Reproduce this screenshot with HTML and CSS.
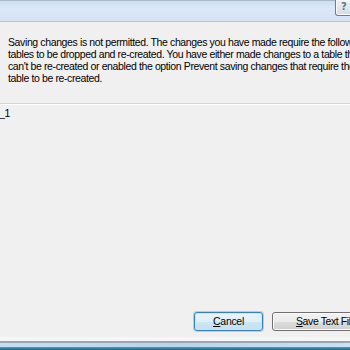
FILE: index.html
```html
<!DOCTYPE html>
<html>
<head>
<meta charset="utf-8">
<link rel="stylesheet" href="styles.css">
</head>
<body>
<div class="dialog">
  <div class="titlebar">
    <div class="help">?</div>
  </div>
  <div class="message">
    <span class="line">Saving changes is not permitted. The changes you have made require the following</span>
    <span class="line">tables to be dropped and re-created. You have either made changes to a table that</span>
    <span class="line">can't be re-created or enabled the option Prevent saving changes that require the</span>
    <span class="line">table to be re-created.</span>
  </div>
  <div class="list">
    <div class="item">_1</div>
  </div>
  <div class="buttons">
    <button class="btn default"><u>C</u>ancel</button>
    <button class="btn save"><u>S</u>ave Text File</button>
  </div>
  <div class="footer">
    <div class="f1"></div>
    <div class="f2"></div>
    <div class="f3"></div>
    <div class="f4"></div>
  </div>
</div>
</body>
</html>
```

FILE: styles.css
```css
html, body {
  margin: 0;
  padding: 0;
  width: 350px;
  height: 350px;
  overflow: hidden;
  background: #f0f0f0;
}
.dialog {
  width: 350px;
  height: 350px;
  display: flex;
  flex-direction: column;
  font-family: "Liberation Sans", Arial, sans-serif;
  font-size: 10.5px;
  letter-spacing: -0.38px;
  color: #000;
  overflow: hidden;
}
.titlebar {
  height: 20px;
  flex: none;
  background: linear-gradient(#cfdff1, #dbe8f6 40%, #d3e2f3);
  border-top: 1px solid #a9b8c9;
  border-bottom: 1px solid #b8c4d0;
  position: relative;
}
.help {
  position: absolute;
  right: -3px;
  top: -1px;
  width: 18px;
  height: 16px;
  box-sizing: border-box;
  border: 1px solid #6f7b88;
  border-top: none;
  border-radius: 0 0 3px 3px;
  background: linear-gradient(#eef2f6, #d4dbe3);
  color: #6b7480;
  font-family: "DejaVu Sans", sans-serif;
  font-size: 10px;
  font-weight: bold;
  letter-spacing: 0;
  line-height: 14px;
  text-align: center;
  box-shadow: inset 0 0 0 1px #f8fafc;
}
.message {
  flex: none;
  height: 82px;
  padding: 14px 0 0 8px;
  box-sizing: border-box;
  border-bottom: 1px solid #d5d5d5;
}
.line {
  display: block;
  white-space: nowrap;
  line-height: 12px;
  height: 12px;
}
.list {
  flex: 1;
  border-top: 1px solid #ffffff;
  padding: 2px 0 0 0;
}
.item {
  line-height: 12px;
  margin-left: -1px;
}
.buttons {
  flex: none;
  height: 25px;
  padding-top: 5px;
  display: flex;
  justify-content: flex-end;
  align-items: flex-start;
  gap: 9px;
  margin-right: -34px;
}
.btn {
  height: 19px;
  box-sizing: border-box;
  font-family: inherit;
  font-size: 10.5px;
  letter-spacing: -0.3px;
  color: #000;
  padding: 0;
  border: 1px solid #707070;
  border-radius: 3px;
  background: linear-gradient(#f2f2f2, #ebebeb 50%, #dddddd 51%, #cfcfcf);
  box-shadow: inset 0 0 0 1px #fbfbfb;
  width: 112px;
  line-height: 15px;
}
.btn.save {
  text-align: left;
  padding-left: 23px;
  white-space: nowrap;
  letter-spacing: -0.4px;
}
.btn.default {
  width: 69px;
  border-color: #3c7fb1;
  background: linear-gradient(#e9f4fb, #e0eff9 50%, #cde6f6 51%, #c1e0f4);
  box-shadow: inset 0 0 0 1px #c8e6f8, 0 0 0 1px #a7d3ef;
}
.footer {
  flex: none;
}
.f1 { height: 4px; background: #f6f6f6; }
.f2 { height: 2px; background: #9aa6b2; }
.f3 { height: 4px; background: linear-gradient(90deg, #c4def0, #b6d6ee 50%, #c9e1f2); }
.f4 { height: 3px; background: linear-gradient(#5d98bb, #1c6488); }
```
